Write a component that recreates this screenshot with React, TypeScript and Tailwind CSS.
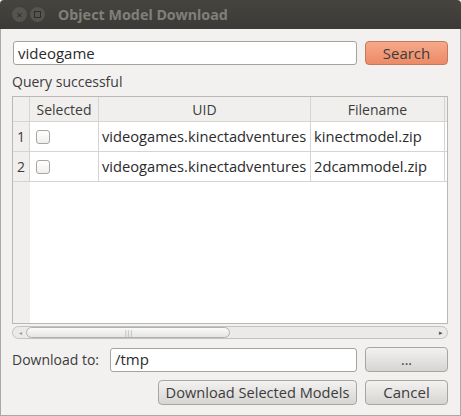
import React from 'react';

const font = { fontFamily: '"Open Sans", "Noto Sans", sans-serif' };

function Checkbox() {
  return <div className="h-[14px] w-[14px] rounded-[3px] border border-[#a7a59f] bg-gradient-to-b from-white to-[#f0efed]" />;
}

function GreyButton({ children, className = '' }: { children: React.ReactNode; className?: string }) {
  return (
    <button
      className={`flex h-[25px] items-center justify-center rounded-[4px] border border-[#a8a6a1] bg-gradient-to-b from-[#f3f2f1] to-[#d7d5d2] text-[#3c3c3c] ${className}`}
    >
      {children}
    </button>
  );
}

export default function App() {
  const rows = [
    { n: 1, uid: 'videogames.kinectadventures', file: 'kinectmodel.zip' },
    { n: 2, uid: 'videogames.kinectadventures', file: '2dcammodel.zip' },
  ];

  return (
    <div className="flex h-[416px] w-[461px] flex-col bg-[#f2f1f0] text-[#3c3c3c]" style={font}>
      {/* title bar */}
      <div className="flex h-[29px] items-center rounded-t-[4px] bg-gradient-to-b from-[#45443f] to-[#3b3a36] pl-[12px]">
        <div className="flex h-[15px] w-[15px] items-center justify-center rounded-full bg-[#55544f] text-[11px] leading-none text-[#2e2d2a]">×</div>
        <div className="ml-[3px] flex h-[15px] w-[15px] items-center justify-center rounded-full bg-[#55544f]">
          <div className="h-[7px] w-[7px] border border-[#2e2d2a]" />
        </div>
        <span className="ml-[13px] text-[14.3px] font-bold text-[#807f7a]" style={{ fontFamily: '"Noto Sans", sans-serif' }}>
          Object Model Download
        </span>
      </div>

      {/* body */}
      <div className="flex flex-1 flex-col border-x border-b border-[#a9a8a5] pl-[11px] pr-[12px] pt-[12px]">
        <div className="flex gap-[8px]">
          <div className="ml-px flex h-[24px] flex-1 items-center rounded-[3px] border border-[#a5a39e] bg-white px-[4px] text-[15px] text-[#2b2b2b]">
            videogame
          </div>
          <button className="h-[24px] w-[83px] rounded-[4px] border border-[#c5785a] bg-gradient-to-b from-[#f6a98a] to-[#ec8a66] text-[15px] text-[#3c3c3c]">
            Search
          </button>
        </div>

        <div className="mt-[6px] text-[14px] leading-[21px]">Query successful</div>

        {/* table */}
        <div className="mt-[4px] flex h-[228px] flex-col border border-[#bab8b4] bg-white">
          <div className="flex h-[25px] border-b border-[#d6d4d0] bg-[#f0efed] text-[14px]">
            <div className="w-[17px] border-r border-[#d6d4d0]" />
            <div className="flex w-[69px] items-center justify-center border-r border-[#d6d4d0]">Selected</div>
            <div className="flex w-[212px] items-center justify-center border-r border-[#d6d4d0]">UID</div>
            <div className="flex w-[134px] items-center justify-center border-r border-[#d6d4d0]">Filename</div>
            <div className="flex-1" />
          </div>
          {rows.map((r) => (
            <div key={r.n} className="flex h-[30px] border-b border-[#d6d4d0] text-[14.7px] text-[#2b2b2b]">
              <div className="flex w-[17px] items-center justify-center border-r border-[#d6d4d0] bg-[#f0efed] text-[14px] text-[#3c3c3c]">{r.n}</div>
              <div className="flex w-[69px] items-center border-r border-[#d6d4d0] pl-[6px]">
                <Checkbox />
              </div>
              <div className="flex w-[212px] items-center whitespace-nowrap border-r border-[#d6d4d0] pl-[3px]">{r.uid}</div>
              <div className="flex w-[134px] items-center whitespace-nowrap border-r border-[#d6d4d0] pl-[3px]">{r.file}</div>
              <div className="flex-1" />
            </div>
          ))}
          <div className="flex flex-1">
            <div className="w-[17px] bg-[#f0efed]" />
          </div>
        </div>

        {/* horizontal scrollbar */}
        <div className="mt-[2px] flex h-[13px] items-center rounded-full border border-[#c4c2be] bg-[#ebeae8] px-[1px]">
          <span className="ml-[5px] text-[6px] leading-none text-[#9a9893]">◂</span>
          <div className="ml-[4px] flex h-[11px] w-[204px] items-center justify-center rounded-full border border-[#b2b0ac] bg-gradient-to-b from-[#fafaf9] to-[#e6e5e3]">
            <span className="text-[7px] leading-none tracking-[-1px] text-[#9a9893]">|||</span>
          </div>
          <div className="flex-1" />
          <span className="mr-[3px] text-[7px] leading-none text-[#55544f]">▸</span>
        </div>

        <div className="mt-[8px] flex items-center">
          <span className="w-[98px] text-[14px]">Download to:</span>
          <div className="flex h-[24px] flex-1 items-center rounded-[3px] border border-[#a5a39e] bg-white px-[4px] text-[15px] text-[#2b2b2b]">
            /tmp
          </div>
          <GreyButton className="ml-[8px] w-[83px] text-[14px]">...</GreyButton>
        </div>

        <div className="mt-[8px] flex justify-end gap-[8px]">
          <GreyButton className="w-[199px] text-[14.6px]">Download Selected Models</GreyButton>
          <GreyButton className="w-[83px] text-[15px]">Cancel</GreyButton>
        </div>
      </div>
    </div>
  );
}
